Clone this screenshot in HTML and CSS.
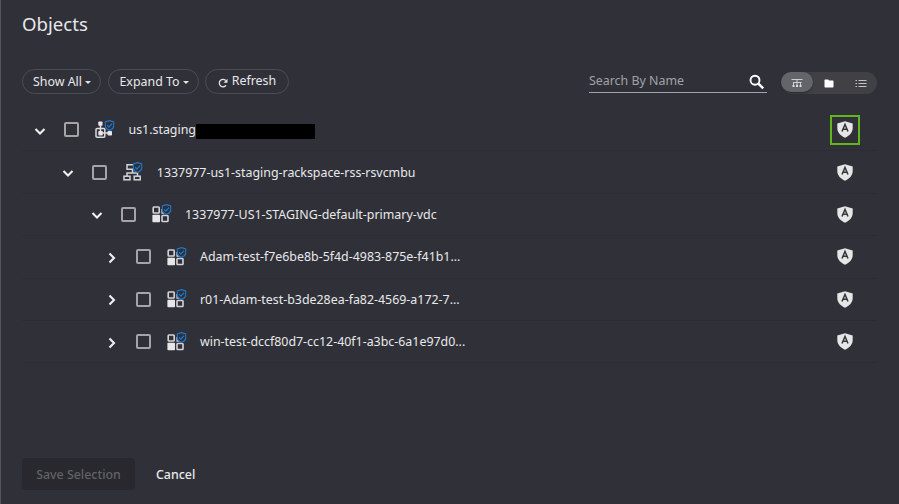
FILE: index.html
```html
<!DOCTYPE html>
<html lang="en">
<head>
<meta charset="utf-8">
<title>Objects</title>
<link rel="stylesheet" href="styles.css">
</head>
<body>
<svg class="defs" aria-hidden="true">
  <symbol id="down" viewBox="0 0 12 12"><path d="M1.500 4 6 8.500 10.500 4" fill="none" stroke="#f0f0f0" stroke-width="2.100"/></symbol>
  <symbol id="right" viewBox="0 0 12 12"><path d="M3.500 1.500 8 6 3.500 10.500" fill="none" stroke="#f0f0f0" stroke-width="2.100"/></symbol>
  <symbol id="check" viewBox="0 0 10 11"><path d="M5 .7 9.300 2v3.500C9.300 7.800 7.300 9.600 5 10.400 2.700 9.600.7 7.800.7 5.500V2Z" fill="#2f3037" stroke="#1f77c9" stroke-width="1.300"/><path d="m2.700 5.300 1.700 1.800 3.100-3.500" fill="none" stroke="#1f77c9" stroke-width="1.300"/></symbol>
  <symbol id="host" viewBox="0 0 20 20"><g fill="none" stroke="#dcdcde" stroke-width="1.500"><rect x="1" y="8.500" width="8.800" height="8.800" rx="1"/><path d="M5.500 4v9h9"/></g><g fill="#e6e6e8"><rect x="3.300" y="1.500" width="4.200" height="4.200" rx=".8"/><rect x="3.300" y="11" width="4.500" height="4.500" rx=".8"/><rect x="12.500" y="11" width="4.500" height="4.500" rx=".8"/></g><use href="#check" x="9.500" y="0" width="10" height="11"/></symbol>
  <symbol id="org" viewBox="0 0 20 20"><g fill="none" stroke="#d4d4d7" stroke-width="1.500"><path d="M11 2.700H4v4.500h8M9.500 7.500v3.500M4 14v-3h10.500v3"/><rect x="1" y="14.200" width="6" height="3.600"/><rect x="11.200" y="14.200" width="6" height="3.600"/></g><use href="#check" x="9.500" y="0" width="10" height="11"/></symbol>
  <symbol id="vdc" viewBox="0 0 20 20"><g fill="none" stroke="#d4d4d7" stroke-width="1.600"><rect x="1.200" y="3" width="6" height="6" rx=".7"/><rect x="10" y="11.500" width="6" height="6" rx=".7"/><path d="M10.200 5v4h5"/></g><rect x=".4" y="10.800" width="7.600" height="7.500" rx=".8" fill="#e6e6e8"/><use href="#check" x="9.500" y="0" width="10" height="11"/></symbol>
  <symbol id="auto" viewBox="0 0 16 17"><path d="M8 .3 15.700 2.500V7c0 4.500-3.500 8-7.700 9.700C3.800 15 .3 11.500 .3 7V2.500Z" fill="#e6e6e7"/><path d="M5 10.500 8 3.500 11 10.500M6 8.300h4" fill="none" stroke="#35363c" stroke-width="1.500"/></symbol>
</svg>
<main class="panel">
  <h1>Objects</h1>
  <div class="toolbar">
    <button class="pill show">Show All<i class="caret"></i></button>
    <button class="pill expand">Expand To<i class="caret"></i></button>
    <button class="pill refresh"><svg width="10" height="10" viewBox="0 0 10 10"><path d="M8 7.300A3.700 3.700 0 1 1 7.700 2.500" fill="none" stroke="#e4e4e6" stroke-width="1.300"/><path d="M9.500.8v4H5.500Z" fill="#e4e4e6"/></svg><span>Refresh</span></button>
    <div class="search"><span>Search By Name</span><svg width="16" height="16" viewBox="0 0 16 16" fill="none" stroke="#fff"><circle cx="6" cy="6.200" r="4.500" stroke-width="1.900"/><path d="m9.400 9.600 4.800 4.800" stroke-width="2.500"/></svg></div>
    <div class="switch">
      <span class="on"><svg width="12" height="10" viewBox="0 0 12 10"><path d="M.5 1.500h11M2 4.500h8.500M6 1.500V8M2.500 4.500v3M9.500 4.500v3" fill="none" stroke="#cfcfd2" stroke-width="1"/><path d="M1.500 7h2v2h-2zM5 7h2v2H5zM8.500 7h2v2h-2z" fill="#dedee0"/></svg></span>
      <span><svg width="10" height="9" viewBox="0 0 10 9"><path d="M.5 1.200Q.5.500 1.200.500h3l1 1h3.600q.7 0 .7.700v5.600q0 .7-.7.700H1.200q-.7 0-.7-.7Z" fill="#fff"/></svg></span>
      <span><svg width="12" height="9" viewBox="0 0 12 9"><path d="M.5 1.500H2M.5 4.500H2M.5 7.500H2M3.500 1.500h8M3.500 4.500h8M3.500 7.500h8" stroke="#c4c4c6" stroke-width="1.200"/></svg></span>
    </div>
  </div>
  <div class="tree">
    <div class="row l1"><svg class="chev"><use href="#down"/></svg><i class="box"></i><svg class="type"><use href="#host"/></svg><span class="name">us1.staging</span><i class="redacted"></i><span class="policy marked"><svg><use href="#auto"/></svg></span></div>
    <div class="row l2"><svg class="chev"><use href="#down"/></svg><i class="box"></i><svg class="type"><use href="#org"/></svg><span class="name">1337977-us1-staging-rackspace-rss-rsvcmbu</span><span class="policy"><svg><use href="#auto"/></svg></span></div>
    <div class="row l3"><svg class="chev"><use href="#down"/></svg><i class="box"></i><svg class="type"><use href="#vdc"/></svg><span class="name">1337977-US1-STAGING-default-primary-vdc</span><span class="policy"><svg><use href="#auto"/></svg></span></div>
    <div class="row l4"><svg class="chev"><use href="#right"/></svg><i class="box"></i><svg class="type"><use href="#vdc"/></svg><span class="name">Adam-test-f7e6be8b-5f4d-4983-875e-f41b1...</span><span class="policy"><svg><use href="#auto"/></svg></span></div>
    <div class="row l4"><svg class="chev"><use href="#right"/></svg><i class="box"></i><svg class="type"><use href="#vdc"/></svg><span class="name">r01-Adam-test-b3de28ea-fa82-4569-a172-7...</span><span class="policy"><svg><use href="#auto"/></svg></span></div>
    <div class="row l4"><svg class="chev"><use href="#right"/></svg><i class="box"></i><svg class="type"><use href="#vdc"/></svg><span class="name">win-test-dccf80d7-cc12-40f1-a3bc-6a1e97d0...</span><span class="policy"><svg><use href="#auto"/></svg></span></div>
  </div>
  <footer><button class="save" disabled>Save Selection</button><button class="cancel">Cancel</button></footer>
</main>
</body>
</html>
```
FILE: styles.css
```css
* { box-sizing: border-box; }
body { margin: 0; background: #303138; color: #e8e8ea; font: 12.400px/18px "Noto Sans", sans-serif; }
.defs { display: none; }
.panel { height: 504px; border-left: 1px solid #55565b; padding: 11px 22px 14px 21px; display: flex; flex-direction: column; }
h1 { margin: 0; font-size: 18.600px; line-height: 26px; font-weight: 400; }
button { font: inherit; color: inherit; white-space: nowrap; background: none; border: 0; padding: 0; }
.toolbar { display: flex; align-items: flex-start; height: 27px; margin-top: 31px; }
.pill { height: 25px; margin-top: 1px; border: 1px solid #4c4d52; border-radius: 13px; display: flex; align-items: center; justify-content: center; padding: 1px 0 0 1px; }
.show { width: 79px; }
.expand { width: 91px; margin-left: 7px; }
.refresh { width: 84px; margin-left: 6px; gap: 4px; padding: 0 0 1px; }
.refresh svg { margin-top: 3px; }
.refresh span { margin-top: -1px; }
.caret { margin-left: 3px; border: 3px solid transparent; border-top-color: #e4e4e6; border-bottom: 0; }
.search { width: 178px; height: 25px; margin-left: auto; border-bottom: 1px solid #a2a3a7; display: flex; justify-content: space-between; color: #a1a2a6; padding: 4px 2px 0 0; }
.search svg { margin-top: 2px; }
.switch { display: flex; width: 96px; height: 22px; margin: 4px 0 0 14px; border-radius: 11px; background: #414145; }
.switch span { flex: 1; display: flex; align-items: center; justify-content: center; }
.switch .on { height: 20px; background: #64656b; border-radius: 10px; box-shadow: 0 1px 2px #0006; }
.switch .on svg { margin-top: 2px; }
.tree { margin-top: 14px; }
.row { height: 42.400px; display: flex; align-items: center; border-bottom: 1px solid #2c2d34; }
.l1 { padding-left: 12px; }
.l2 { padding-left: 40.300px; }
.l3 { padding-left: 68.500px; }
.l4 { padding-left: 83.500px; }
.chev { width: 12px; height: 12px; flex: none; margin: 2px 18px 0 0; }
.box { width: 15px; height: 15px; border: 2px solid #a5a5a8; border-radius: 2px; margin-right: 16px; flex: none; }
.type { width: 20px; height: 20px; flex: none; margin-right: 13px; }
.name { white-space: nowrap; margin: 1px 0 0 .500px; }
.redacted { width: 119px; height: 15px; margin: 3px 0 0 0; background: #000; }
.policy { width: 30px; height: 30px; margin-left: auto; margin-right: 17px; display: flex; align-items: center; justify-content: center; }
.policy svg { width: 16px; height: 17px; margin-top: 0; }
.marked { border: 2px solid #62b51b; }
footer { margin-top: auto; display: flex; align-items: center; height: 32px; }
.save { width: 113px; height: 32px; padding-top: 1px; background: #28282e; color: #626267; border-radius: 4px; font-weight: 500; }
.cancel { margin: 1px 0 0 21px; font-weight: 500; }
```
